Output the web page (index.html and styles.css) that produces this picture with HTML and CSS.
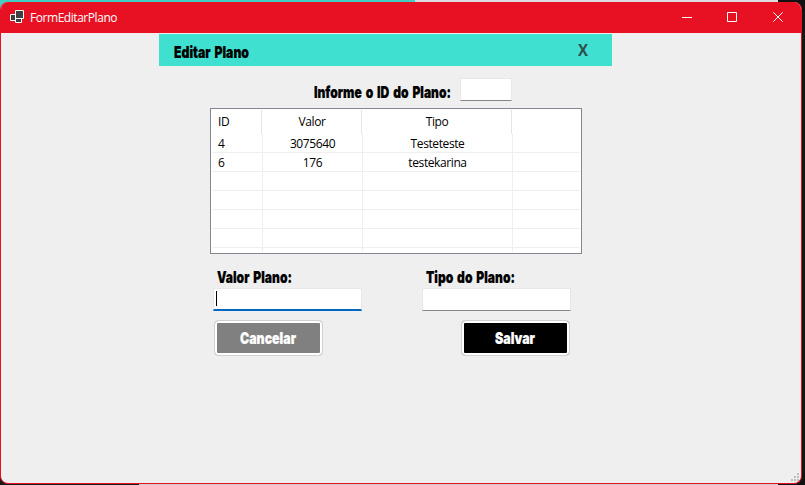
FILE: index.html
```html
<!DOCTYPE html>
<html lang="pt-BR">
<head>
<meta charset="utf-8">
<title>FormEditarPlano</title>
<link rel="stylesheet" href="styles.css">
</head>
<body>
<div class="window">
  <header class="titlebar">
    <svg class="app-icon" width="14" height="13" viewBox="0 0 14 13" fill="#404040" stroke="#fff"><path d="M.5 4.500h5v6h-5zM5.500 8.500h6v4h-6zM5.500.5h8v8h-8z"/></svg>
    <span class="title">FormEditarPlano</span>
    <svg class="controls" width="102" height="10" viewBox="0 0 102 10" fill="none" stroke="#fff"><path d="M0 5.500h10M45.500.5h9v9h-9z"/><path d="M91.300.3l9.400 9.400M100.700.3l-9.400 9.400"/></svg>
  </header>
  <main class="form">
    <div class="banner">
      <svg class="heading" width="80" height="24"><text x="0" y="18" textLength="75" lengthAdjust="spacingAndGlyphs">Editar Plano</text></svg>
      <svg class="close" width="11" height="22"><text x="0" y="16" textLength="10" lengthAdjust="spacingAndGlyphs">X</text></svg>
    </div>
    <div class="search">
      <svg class="heading" width="146" height="24"><text x="0" y="18" textLength="137" lengthAdjust="spacingAndGlyphs">Informe o ID do Plano:</text></svg>
      <div class="field id-field"></div>
    </div>
    <div class="list">
      <div class="row head"><span>ID</span><span>Valor</span><span>Tipo</span><span></span></div>
      <div class="row"><span>4</span><span>3075640</span><span>Testeteste</span><span></span></div>
      <div class="row"><span>6</span><span>176</span><span>testekarina</span><span></span></div>
      <div class="row"><span></span><span></span><span></span><span></span></div>
      <div class="row"><span></span><span></span><span></span><span></span></div>
      <div class="row"><span></span><span></span><span></span><span></span></div>
      <div class="row"><span></span><span></span><span></span><span></span></div>
      <div class="row last"><span></span><span></span><span></span><span></span></div>
    </div>
    <div class="fields">
      <div class="group">
        <svg class="heading" width="90" height="24"><text x="4" y="18" textLength="75" lengthAdjust="spacingAndGlyphs">Valor Plano:</text></svg>
        <div class="field focused"><i class="caret"></i></div>
        <div class="button cancel"><svg class="heading" width="57" height="24"><text x="0" y="18" textLength="56" lengthAdjust="spacingAndGlyphs">Cancelar</text></svg></div>
      </div>
      <div class="group right">
        <svg class="heading" width="100" height="24"><text x="4" y="18" textLength="89" lengthAdjust="spacingAndGlyphs">Tipo do Plano:</text></svg>
        <div class="field"></div>
        <div class="button save"><svg class="heading" width="41" height="24"><text x="0" y="18" textLength="40" lengthAdjust="spacingAndGlyphs">Salvar</text></svg></div>
      </div>
    </div>
  </main>
  <svg class="grip" width="8" height="8" fill="#bfbfbf"><path d="M6 0h2v2H6zM3 3h2v2H3zM6 3h2v2H6zM0 6h2v2H0zM3 6h2v2H3zM6 6h2v2H6z"/></svg>
</div>
</body>
</html>
```

FILE: styles.css
```css
* { box-sizing: border-box; }
body {
  margin: 0;
  width: 805px;
  height: 485px;
  overflow: hidden;
  padding-top: 2px;
  font: 12px/16px "Open Sans", "Noto Sans", sans-serif;
  color: #000;
  background:
    linear-gradient(90deg, #40cfc0 415px, #dedce0 415px 778px, #111 778px) 0 0 / 100% 12px no-repeat,
    linear-gradient(90deg, #17181c 139px, #ccc 139px 778px, #111 778px) 0 100% / 100% 12px no-repeat,
    #151515;
}
.window {
  position: relative;
  width: 802px;
  height: 482px;
  border: 1px solid #e81123;
  border-top: 0;
  border-radius: 8px;
  overflow: hidden;
  background: #efefef;
}
.titlebar {
  display: flex;
  align-items: center;
  height: 31px;
  padding: 0 17px 0 9px;
  background: #e81123;
  color: #fff;
}
.app-icon { margin-top: -2px; }
.title { margin-left: 6px; font-size: 12px; letter-spacing: -.45px; }
.controls { margin-left: auto; margin-top: -1px; }
.form { padding-top: 1px; }
.banner {
  display: flex;
  width: 453px;
  height: 32px;
  margin-left: 158px;
  padding: 6px 23px 0 15px;
  background: #40e0d0;
}
.heading { display: block; flex: none; overflow: visible; }
.heading text {
  font: 900 16.500px Inter, Roboto, sans-serif;
  word-spacing: 2px;
  fill: currentColor;
  stroke: currentColor;
  stroke-width: .2px;
}
.close { margin-left: auto; font: 700 15.500px "Open Sans", sans-serif; fill: #2f4f4f; }
.search { display: flex; height: 42px; padding: 14px 0 0 313px; }
.field {
  width: 149px;
  height: 23px;
  background: #fff;
  border: 1px solid #e8e8e8;
  border-bottom-color: #868686;
  border-radius: 1px;
}
.id-field { width: 52px; margin-top: -2px; }
.list {
  width: 372px;
  height: 146px;
  margin-left: 209px;
  padding: 1px;
  border: 1px solid #828790;
  background: #fff;
  overflow: hidden;
}
.row { display: grid; grid-template-columns: 51px 100px 150px 1fr; height: 19px; border-bottom: 1px solid #efefef; }
.row span { border-right: 1px solid #efefef; text-align: center; line-height: 19px; letter-spacing: -.4px; }
.row span:first-child { text-align: left; padding-left: 6px; }
.row span:last-child { border-right: 0; }
.head { grid-template-columns: 50px 100px 150px 1fr; height: 24px; border: 0; }
.head span { border-color: #e5e5e5; line-height: 24px; padding-left: 1px; }
.last { height: 4px; border: 0; }
.fields { display: flex; padding: 11px 0 0 212px; }
.group { width: 150px; }
.right { margin-left: 59px; width: 149px; }
.group > .field { margin-top: -1px; }
.focused { border-bottom: 2px solid #0067c0; border-radius: 0; padding: 2px 0 0 2px; }
.caret { display: block; width: 1px; height: 15px; background: #000; }
.button {
  display: flex;
  justify-content: center;
  width: 109px;
  height: 36px;
  margin: 9px 0 0 1px;
  padding: 2px;
  border: 1px solid #d0d0d0;
  border-radius: 4px;
  background-color: #fff;
  background-clip: padding-box;
  color: #fff;
}
.button .heading { margin-top: 3px; }
.cancel { box-shadow: inset 0 0 0 2px #fff; background-color: #808080; }
.save { margin-left: 39px; box-shadow: inset 0 0 0 2px #fff; background-color: #000; }
.grip { position: absolute; right: 2px; bottom: 2px; }
```
